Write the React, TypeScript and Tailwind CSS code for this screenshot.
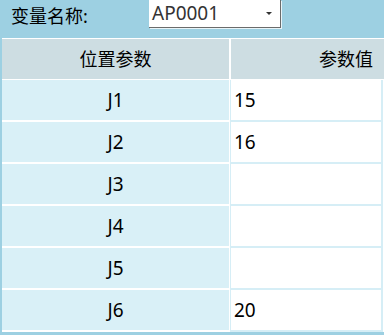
import React from 'react';

const rows: { name: string; value: string }[] = [
  { name: 'J1', value: '15' },
  { name: 'J2', value: '16' },
  { name: 'J3', value: '' },
  { name: 'J4', value: '' },
  { name: 'J5', value: '' },
  { name: 'J6', value: '20' },
];

const font = { fontFamily: '"Noto Sans", "Noto Sans CJK SC", sans-serif' };

export default function App() {
  return (
    <div className="w-[384px] h-[335px] overflow-hidden bg-[#9dd0e2] text-black" style={font}>
      {/* top bar */}
      <div className="flex h-[38px] items-start">
        <div className="pl-[11px] pt-[4px] text-[18px] leading-[24px] w-[149px]">变量名称:</div>
        <div className="relative flex h-[28px] w-[132px] items-center bg-white border-r border-b border-[#6b6b6b] shadow-[1px_1px_0_#e8f4f8]">
          <span className="pl-[3px] text-[19px] leading-none text-[#333]">AP0001</span>
          <span className="absolute right-[8px] top-[12px] h-0 w-0 border-x-[3px] border-t-[3px] border-x-transparent border-t-[#333]" />
        </div>
      </div>

      {/* table */}
      <div className="ml-[2px] bg-white pt-px">
        <div className="flex h-[41px] gap-[2px] border-b border-white">
          <div className="flex w-[227px] items-center justify-center bg-[#cddde2] text-[18px]">位置参数</div>
          <div className="flex flex-1 items-center justify-end bg-[#cddde2] pr-[11px] text-[18px]">参数值</div>
        </div>
        {rows.map((r) => (
          <div key={r.name} className="flex h-[42px] gap-[1px]">
            <div className="mb-[2px] flex w-[227px] items-center justify-center bg-[#d9f0f7] text-[19px]">{r.name}</div>
            <div className="flex w-[153px] items-center border-l border-r-2 border-b-2 border-[#d6eef6] bg-white pl-[3px] text-[19px]">
              {r.value}
            </div>
          </div>
        ))}
      </div>
    </div>
  );
}
